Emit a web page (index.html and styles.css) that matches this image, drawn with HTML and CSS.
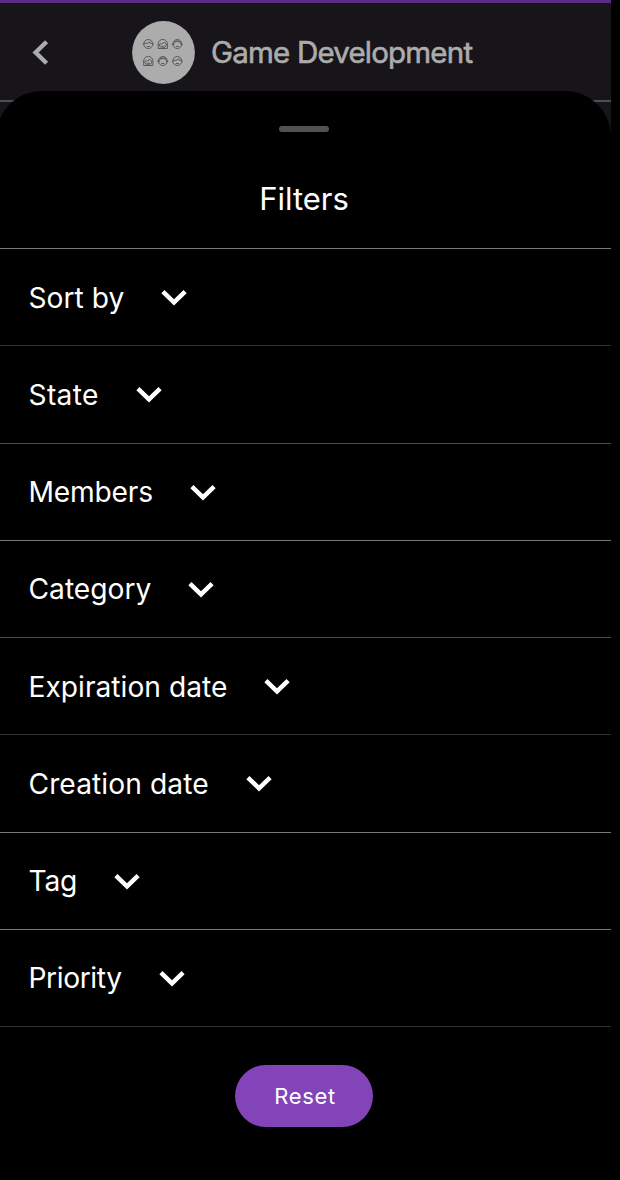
FILE: index.html
```html
<!DOCTYPE html>
<html lang="en">
<head>
<meta charset="utf-8">
<title>Filters</title>
<link rel="stylesheet" href="styles.css">
</head>
<body>
<svg width="0" height="0" class="defs">
  <defs>
    <symbol id="chev" viewBox="0 0 26 17"><path d="M1.9 2.6 13 13.300 24.100 2.600" fill="none" stroke="#fff" stroke-width="4.500"/></symbol>
    <g id="short" fill="none" stroke="#505050" stroke-width=".9"><circle cx="5" cy="5" r="4.500"/><path d="M-.4 5.200h1.200M9.200 5.200h1.200M1 4.500C4 4.500 6 3.500 7 2.500M6 3.700 9 4.500M3.500 7.500h3"/></g>
    <g id="long" fill="none" stroke="#505050" stroke-width=".9"><path d="M.4 9.500V5a4.600 4.600 0 0 1 9.200 0v4.500zM2 5c2 0 4-.7 4.500-2C7 4 8 4.800 8.500 5M1.500 5c0 5.300 7 5.300 7 0M3.500 7.300h3"/></g>
    <g id="round" fill="none" stroke="#505050" stroke-width=".9"><circle cx="5" cy="5" r="4.500"/><path d="M-.4 5.500h1.900V4C3 2 7 2 8.500 4v1.500h1.900M2 3c2-1.500 4-1.500 6 0M3.500 7.500h3"/></g>
  </defs>
</svg>
<div class="screen">
  <header class="topbar">
    <svg class="back" width="17" height="25" viewBox="0 0 17 25"><path d="M14.600 1.700 3.600 12.500 14.600 23.300" fill="none" stroke="#acacac" stroke-width="4.400"/></svg>
    <svg class="avatar" width="63" height="63" viewBox="0 0 63 63">
      <circle cx="31.500" cy="31.500" r="31.400" fill="#acacac"/>
      <use href="#short" x="11.300" y="18"/><use href="#long" x="25.800" y="18"/><use href="#round" x="40.300" y="18"/>
      <use href="#long" x="11.300" y="35"/><use href="#round" x="25.800" y="35"/><use href="#short" x="40.300" y="35"/>
    </svg>
    <div class="title">Game Development</div>
  </header>
  <main class="sheet">
    <div class="handle"></div>
    <h1 class="heading">Filters</h1>
    <div class="row bright"><span class="label">Sort by</span><svg class="chev"><use href="#chev"/></svg></div>
    <div class="row dim"><span class="label loose">State</span><svg class="chev"><use href="#chev"/></svg></div>
    <div class="row"><span class="label tight">Members</span><svg class="chev"><use href="#chev"/></svg></div>
    <div class="row bright"><span class="label">Category</span><svg class="chev"><use href="#chev"/></svg></div>
    <div class="row"><span class="label">Expiration date</span><svg class="chev"><use href="#chev"/></svg></div>
    <div class="row dim"><span class="label open">Creation date</span><svg class="chev"><use href="#chev"/></svg></div>
    <div class="row bright"><span class="label tight">Tag</span><svg class="chev"><use href="#chev"/></svg></div>
    <div class="row bright"><span class="label tighter">Priority</span><svg class="chev"><use href="#chev"/></svg></div>
    <div class="footer"><button class="reset">Reset</button></div>
  </main>
</div>
</body>
</html>
```
FILE: styles.css
```css
* { box-sizing: border-box; }
body { margin: 0; background: #000; font-family: Inter, sans-serif; color: #fff; }
.defs { display: block; }
.screen { width: 611px; height: 1180px; overflow: hidden; background: linear-gradient(#17151a 150px, #000 150px); }
.topbar { height: 102px; border-top: 3px solid #5a2d82; border-bottom: 2px solid #4f4e50; display: flex; align-items: flex-start; }
.back { margin: 37px 0 0 32px; }
.avatar { margin: 18px 0 0 83px; }
.title { margin: 29px 0 0 16px; font-size: 29.5px; line-height: 40px; letter-spacing: -.8px; font-weight: 400; -webkit-text-stroke: .6px #acacac; color: #acacac; white-space: nowrap; }
.sheet { margin: -11px 0 0 -4px; height: 1089px; background: #000; border-radius: 46px 46px 0 0; padding: 35px 0 0 4px; position: relative; }
.handle { width: 50px; height: 6px; border-radius: 3px; background: #535156; margin: 0 0 0 279px; }
.heading { margin: 47px 0 0; padding-right: 3px; height: 69px; font-size: 31px; line-height: 40px; font-weight: 400; text-align: center; }
.row { height: 97.28px; border-top: 1px solid #4a4a4a; display: flex; align-items: center; padding: 1px 0 0 28.5px; gap: 37px; }
.row.bright { border-top-color: #777; }
.row.dim { border-top-color: #303030; }
.label { font-size: 28.2px; line-height: 40px; white-space: nowrap; }
.label.loose { letter-spacing: .3px; }
.label.open { letter-spacing: .07px; }
.label.tight { letter-spacing: -.2px; }
.label.tighter { letter-spacing: -.4px; }
.chev { width: 26px; height: 17px; }
.footer { border-top: 1px solid #303030; padding: 38px 0 0 235px; }
.reset { display: block; width: 138px; height: 62px; border: 0; border-radius: 31px; background: #8244b8; color: #fff; font: 400 22px Inter, sans-serif; letter-spacing: .65px; padding: 0 0 0 2px; }
```
